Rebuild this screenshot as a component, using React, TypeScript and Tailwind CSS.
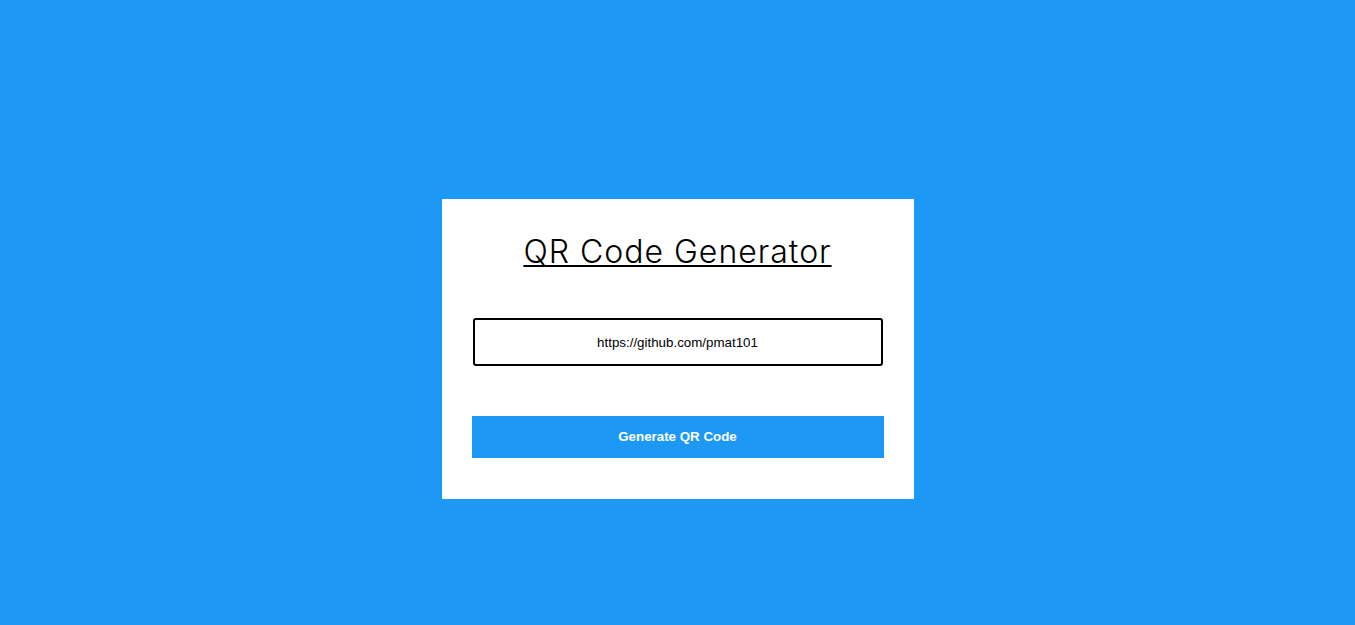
export default function App() {
  return (
    <div className="flex min-h-[625px] w-full justify-center bg-[#1d98f5] pt-[199px]">
      <div className="flex h-[300px] w-[472px] flex-col bg-white px-[30px] pt-[29px]">
        <h1 className="text-center font-['Inter',sans-serif] text-[32px] font-light leading-[48px] tracking-[1px] text-black underline decoration-[2px] underline-offset-[2px]">
          QR Code Generator
        </h1>
        <input
          type="text"
          defaultValue="https://github.com/pmat101"
          className="mx-[1px] mt-[42px] h-[48px] rounded-[3px] border-2 border-black bg-white text-center font-['Liberation_Sans',sans-serif] text-[13.33px] text-black outline-none"
        />
        <button
          type="button"
          className="mt-[50px] h-[42px] w-full bg-[#1d98f5] font-['Liberation_Sans',sans-serif] text-[13.33px] font-bold text-white"
        >
          Generate QR Code
        </button>
      </div>
    </div>
  );
}
